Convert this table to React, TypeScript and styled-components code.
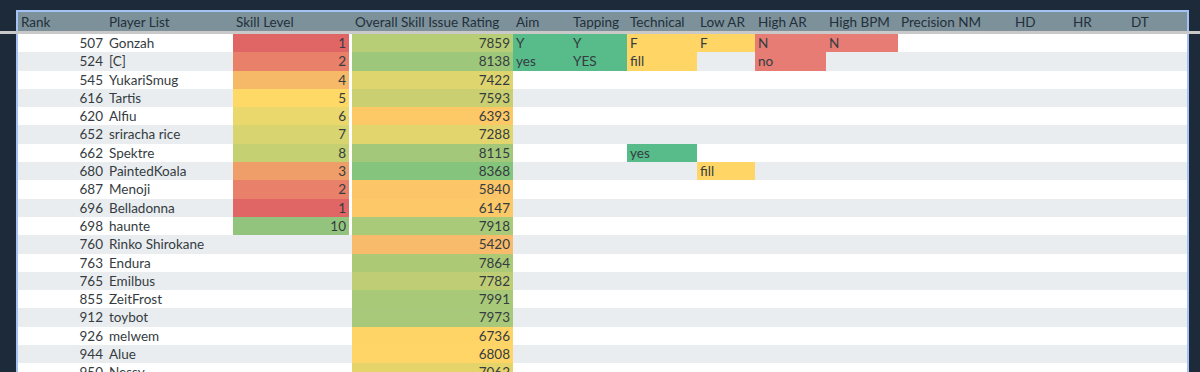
import styled, { createGlobalStyle } from "styled-components";

const COLS =
  "88px 127px 116px 3px 161px 57px 57px 70px 58px 71px 72px 114px 58px 58px 59px";

const GlobalStyle = createGlobalStyle`
  body {
    margin: 0;
    background: #1c2a3a;
    overflow: hidden;
    font-family: Lato, "Noto Sans", sans-serif;
  }
`;

const Page = styled.div`
  height: 372px;
  overflow: hidden;
  padding-top: 10px;
  box-sizing: border-box;
`;

const HeaderRow = styled.div`
  display: grid;
  grid-template-columns: ${COLS};
  margin: 0 11px 0 16px;
  height: 19px;
  border: 2px solid #a4c2f4;
  border-bottom: none;
  background: #7d919a;
  color: #22303a;
  font-size: 13.5px;
  align-items: center;
`;

const HeadCell = styled.div`
  padding: 0 3px;
  white-space: nowrap;
`;

const FreezeBar = styled.div`
  height: 3px;
  background: #c9c9c9;
`;

const Body = styled.div`
  margin: 0 11px 0 16px;
  border-left: 2px solid #a4c2f4;
  border-right: 2px solid #a4c2f4;
`;

const Row = styled.div<{ $alt: boolean }>`
  display: grid;
  grid-template-columns: ${COLS};
  height: 18.3px;
  background: ${(p) => (p.$alt ? "#e9edf0" : "#ffffff")};
  color: #353c41;
  font-size: 13.5px;
`;

const Cell = styled.div<{ $bg?: string; $right?: boolean }>`
  padding: 0 3px;
  line-height: 18.3px;
  white-space: nowrap;
  overflow: hidden;
  text-align: ${(p) => (p.$right ? "right" : "left")};
  background: ${(p) => p.$bg || "transparent"};
`;

const Spacer = styled.div<{ $on: boolean }>`
  background: ${(p) => (p.$on ? "#ffffff" : "transparent")};
`;

const headers = [
  "Rank",
  "Player List",
  "Skill Level",
  "",
  "Overall Skill Issue Rating",
  "Aim",
  "Tapping",
  "Technical",
  "Low AR",
  "High AR",
  "High BPM",
  "Precision NM",
  "HD",
  "HR",
  "DT",
];

const skillColors: Record<number, string> = {
  1: "#e06666",
  2: "#e8806a",
  3: "#ef9d69",
  4: "#f6b968",
  5: "#fed966",
  6: "#ead86c",
  7: "#d8d46f",
  8: "#c4d072",
  10: "#93c47d",
};

const tagColors: Record<string, string> = {
  Y: "#57bb8a",
  yes: "#57bb8a",
  YES: "#57bb8a",
  F: "#ffd666",
  fill: "#ffd666",
  N: "#e67c73",
  no: "#e67c73",
};

type Player = {
  rank: number;
  name: string;
  skill?: number;
  rating: number;
  ratingColor: string;
  tags?: string[];
};

const players: Player[] = [
  { rank: 507, name: "Gonzah", skill: 1, rating: 7859, ratingColor: "#b8ce76", tags: ["Y", "Y", "F", "F", "N", "N"] },
  { rank: 524, name: "[C]", skill: 2, rating: 8138, ratingColor: "#9dc77a", tags: ["yes", "YES", "fill", "", "no"] },
  { rank: 545, name: "YukariSmug", skill: 4, rating: 7422, ratingColor: "#dfd56f" },
  { rank: 616, name: "Tartis", skill: 5, rating: 7593, ratingColor: "#cad071" },
  { rank: 620, name: "Alfiu", skill: 6, rating: 6393, ratingColor: "#fdc967" },
  { rank: 652, name: "sriracha rice", skill: 7, rating: 7288, ratingColor: "#e3d56e" },
  { rank: 662, name: "Spektre", skill: 8, rating: 8115, ratingColor: "#a3c87a", tags: ["", "", "yes"] },
  { rank: 680, name: "PaintedKoala", skill: 3, rating: 8368, ratingColor: "#85c47c", tags: ["", "", "", "fill"] },
  { rank: 687, name: "Menoji", skill: 2, rating: 5840, ratingColor: "#fcc668" },
  { rank: 696, name: "Belladonna", skill: 1, rating: 6147, ratingColor: "#fcc868" },
  { rank: 698, name: "haunte", skill: 10, rating: 7918, ratingColor: "#a9ca78" },
  { rank: 760, name: "Rinko Shirokane", rating: 5420, ratingColor: "#f7bb6b" },
  { rank: 763, name: "Endura", rating: 7864, ratingColor: "#acc976" },
  { rank: 765, name: "Emilbus", rating: 7782, ratingColor: "#bfcd75" },
  { rank: 855, name: "ZeitFrost", rating: 7991, ratingColor: "#a8ca78" },
  { rank: 912, name: "toybot", rating: 7973, ratingColor: "#a8c979" },
  { rank: 926, name: "melwem", rating: 6736, ratingColor: "#ffd466" },
  { rank: 944, name: "Alue", rating: 6808, ratingColor: "#fed566" },
  { rank: 950, name: "Nessy", rating: 7062, ratingColor: "#e5d46a" },
];

const App = () => {
  return (
    <Page>
      <GlobalStyle />
      <HeaderRow>
        {headers.map((h, i) => (
          <HeadCell key={i}>{h}</HeadCell>
        ))}
      </HeaderRow>
      <FreezeBar />
      <Body>
        {players.map((p, i) => {
          const tags = p.tags || [];
          return (
            <Row key={p.rank} $alt={i % 2 === 1}>
              <Cell $right>{p.rank}</Cell>
              <Cell>{p.name}</Cell>
              <Cell $right $bg={p.skill ? skillColors[p.skill] : undefined}>
                {p.skill}
              </Cell>
              <Spacer $on={!!p.skill} />
              <Cell $right $bg={p.ratingColor}>
                {p.rating}
              </Cell>
              {Array.from({ length: 10 }).map((_, j) => {
                const t = tags[j] || "";
                return (
                  <Cell key={j} $bg={t ? tagColors[t] : undefined}>
                    {t}
                  </Cell>
                );
              })}
            </Row>
          );
        })}
      </Body>
    </Page>
  );
};

export default App;
